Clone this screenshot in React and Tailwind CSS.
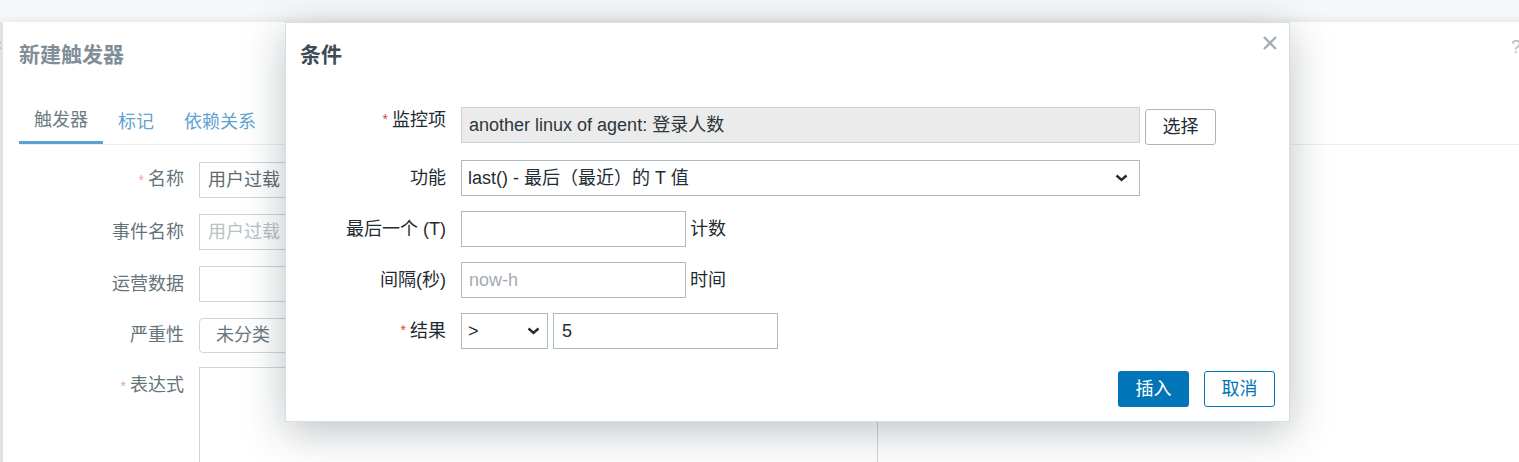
import React from "react";

const font = { fontFamily: '"Liberation Sans", "Noto Sans CJK SC", sans-serif' };

const Chevron = () => (
    <svg width="13" height="8" viewBox="0 0 13 8" className="shrink-0">
        <path d="M1.5 1.5 L6.5 6 L11.5 1.5" fill="none" stroke="#1f2c33" strokeWidth="2.4" />
    </svg>
);

const BgRow = ({ label, required, top, className = "", children }) => (
    <div className={`flex gap-[15px] ${top ? "items-start" : "items-center"} ${className}`}>
        <div className="w-[165px] shrink-0 text-right leading-[36px] text-[#65737b]">
            {required && <span className="text-[14px] text-[#eba3a3] mr-[4px]">*</span>}
            {label}
        </div>
        {children}
    </div>
);

const Row = ({ label, required, children, className = "" }) => (
    <div className={`flex items-center gap-[15px] ${className}`}>
        <div className="w-[146px] shrink-0 text-right text-[#1f2c33]">
            {required && <span className="text-[14px] text-[#e03a3a] mr-[4px] relative top-[-2px]">*</span>}
            {label}
        </div>
        {children}
    </div>
);

const BackgroundDialog = () => (
    <div className="absolute left-[3px] top-[22px] w-[1560px] h-[460px] bg-white shadow-[0_0_10px_rgba(30,50,60,0.10)] px-[16px] pt-[18px]">
        <div className="h-[30px] leading-[30px] text-[21px] font-bold text-[#7f8e97]">新建触发器</div>
        <span className="absolute right-[42px] top-[12px] text-[18px] text-[#b4bcc1]">?</span>

        <div className="mt-[30px] flex border-b border-[#ebeef0] text-[18px]">
            <div className="h-[44px] px-[15px] flex items-center border-b-[3px] border-[#5aa2d0] text-[#6e7c85]">触发器</div>
            <div className="h-[44px] px-[15px] flex items-center text-[#5fa3d0]">标记</div>
            <div className="h-[44px] px-[15px] flex items-center text-[#5fa3d0]">依赖关系</div>
        </div>

        <div className="pt-[16px] flex flex-col gap-[16px] text-[18px]">
            <BgRow label="名称" required>
                <div className="w-[679px] h-[36px] border border-[#cfd6da] px-[8px] leading-[34px] text-[#5e6a71]">用户过载</div>
            </BgRow>
            <BgRow label="事件名称">
                <div className="w-[679px] h-[36px] border border-[#cfd6da] px-[8px] leading-[34px] text-[#b9c1c5]">用户过载</div>
            </BgRow>
            <BgRow label="运营数据">
                <div className="w-[679px] h-[36px] border border-[#cfd6da]" />
            </BgRow>
            <BgRow label="严重性" className="-mt-[1px]">
                <div className="h-[35px] border border-[#cfd6da] rounded-l-[4px] flex">
                    <div className="px-[16px] leading-[33px] text-[#6b777e]">未分类</div>
                    <div className="w-[90px] border-l border-[#cfd6da]" />
                </div>
            </BgRow>
            <BgRow label="表达式" required top className="-mt-[2px]">
                <div className="w-[679px] h-[140px] border border-[#cfd6da]" />
            </BgRow>
        </div>
    </div>
);

const ConditionDialog = () => (
    <div className="absolute left-[285px] top-[22px] w-[1005px] h-[400px] bg-white border border-[#d7dde0] shadow-[0_10px_40px_rgba(20,40,50,0.28)] flex flex-col px-[14px] pt-[17px] pb-[14px] text-[18px]">
        <div className="h-[30px] leading-[30px] text-[21px] font-bold text-[#3e4c55]">条件</div>
        <button className="absolute right-[11px] top-[12px] w-[16px] h-[16px]">
            <svg width="16" height="16" viewBox="0 0 16 16">
                <path d="M2 2 L14 14 M14 2 L2 14" stroke="#a3afb5" strokeWidth="2.4" />
            </svg>
        </button>

        <div className="mt-[37px] flex flex-col gap-[15px]">
            <Row label="监控项" required className="items-start h-[38px]">
                <div className="flex items-start gap-[5px] w-full">
                    <div className="w-[679px] h-[36px] bg-[#ebebeb] border border-[#c8d3d8] px-[7px] leading-[34px] text-[#2b363c]">
                        another linux of agent: 登录人数
                    </div>
                    <button className="mt-[2px] w-[71px] h-[36px] border border-[#a9b6bd] rounded-[3px] bg-white text-[#1f2c33]">选择</button>
                </div>
            </Row>
            <Row label="功能">
                <div className="w-[679px] h-[36px] border border-[#acbbc2] pl-[6px] pr-[11px] flex items-center justify-between text-[#1f2c33]">
                    <span>last() - 最后（最近）的 T 值</span>
                    <Chevron />
                </div>
            </Row>
            <Row label="最后一个 (T)">
                <div className="flex items-center gap-[4px]">
                    <div className="w-[225px] h-[36px] border border-[#acbbc2]" />
                    <span className="text-[#1f2c33]">计数</span>
                </div>
            </Row>
            <Row label="间隔(秒)">
                <div className="flex items-center gap-[4px]">
                    <div className="w-[225px] h-[36px] border border-[#acbbc2] px-[7px] leading-[34px] text-[#a4abaf]">now-h</div>
                    <span className="text-[#1f2c33]">时间</span>
                </div>
            </Row>
            <Row label="结果" required>
                <div className="flex items-center gap-[5px]">
                    <div className="w-[87px] h-[36px] border border-[#acbbc2] pl-[6px] pr-[7px] flex items-center justify-between text-[#1f2c33]">
                        <span>&gt;</span>
                        <Chevron />
                    </div>
                    <div className="w-[225px] h-[36px] border border-[#acbbc2] px-[8px] leading-[34px] text-[#1f2c33]">5</div>
                </div>
            </Row>
        </div>

        <div className="mt-auto flex justify-end gap-[15px]">
            <button className="w-[71px] h-[36px] rounded-[3px] bg-[#0275b8] text-white">插入</button>
            <button className="w-[71px] h-[36px] rounded-[3px] border border-[#0275b8] bg-white text-[#0275b8]">取消</button>
        </div>
    </div>
);

export default function App() {
    return (
        <div className="relative w-[1519px] h-[462px] overflow-hidden bg-[#f6f7f8]" style={font}>
            <div className="absolute left-0 top-[22px] w-[3px] h-[440px] bg-[#e6eaec]" />
            <span className="absolute left-[-7px] top-[34px] text-[16px] text-[#a9c6d8]">×</span>
            <BackgroundDialog />
            <ConditionDialog />
        </div>
    );
}
